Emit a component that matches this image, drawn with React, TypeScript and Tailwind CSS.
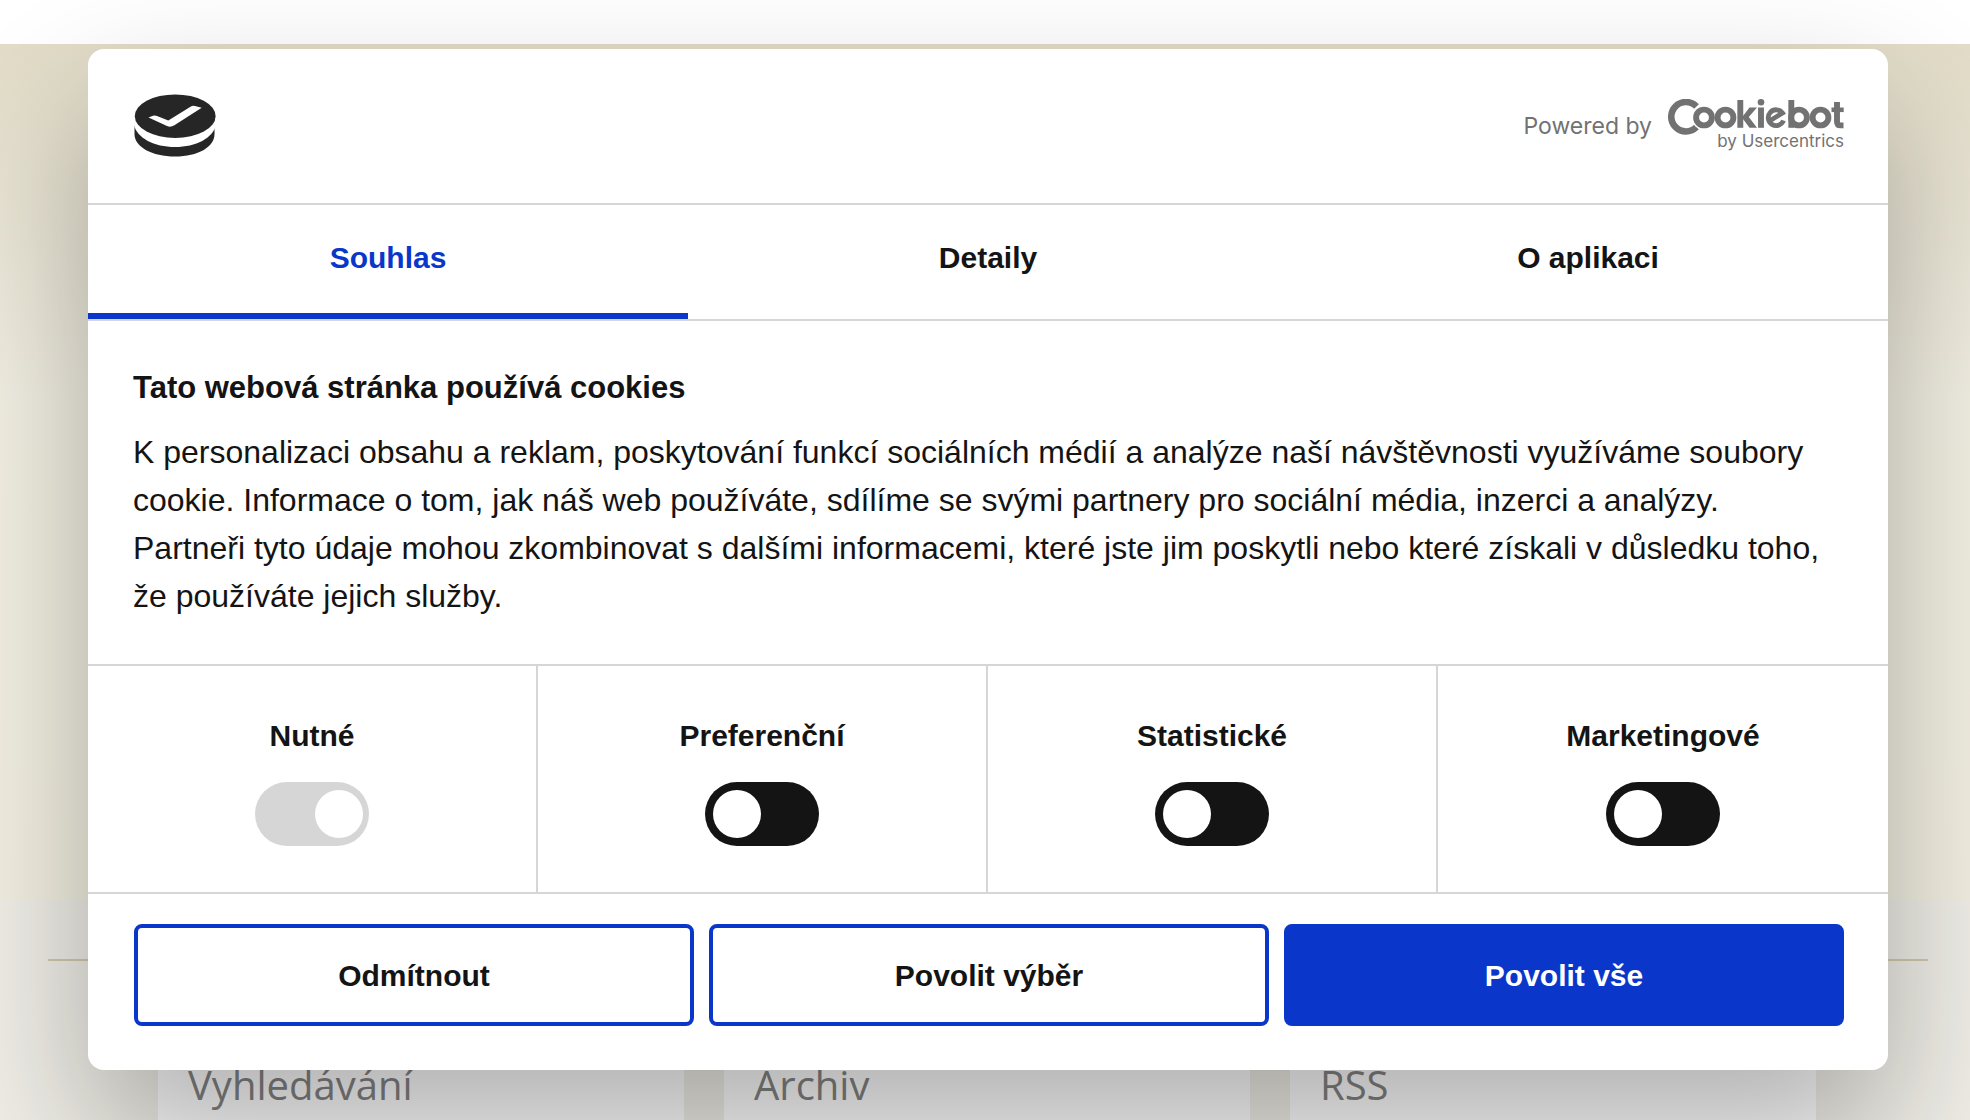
import React from "react";

const tabs = ["Souhlas", "Detaily", "O aplikaci"];
const categories = [
  { id: "necessary", label: "Nutné", locked: true },
  { id: "preferences", label: "Preferenční", locked: false },
  { id: "statistics", label: "Statistické", locked: false },
  { id: "marketing", label: "Marketingové", locked: false },
];
const panels = ["Vyhledávání", "Archiv", "RSS"];

function SiteLogo() {
  return (
    <svg width="82" height="64" viewBox="0 0 82 64" aria-hidden="true">
      <path d="M0.500 30 V40 C0.500 53 18 62.500 41 62.500 C64 62.500 80.500 53 80.500 40 V30 Z" fill="#262626" />
      <path d="M0 24 V31 C3 44 20 53 41 53 C62 53 79 44 82 31 V24 Z" fill="#fff" />
      <ellipse cx="41.200" cy="22.200" rx="40.400" ry="21.800" fill="#262626" />
      <path d="M14.500 23.500 L19 21.800 Q21 21.200 23 22 L34.300 26.500 L56.500 12.700 Q58.500 11.500 61 12 L67.700 13.800 L40 31.500 Q36.500 33.500 33 32 Z" fill="#fff" />
    </svg>
  );
}

function CookiebotLogo() {
  return (
    <svg width="176" height="54" viewBox="0 0 176 54" role="img" aria-label="Cookiebot by Usercentrics">
      <path d="M28.500 7.500 A14.700 14.700 0 1 0 28.500 28" fill="none" stroke="#727272" strokeWidth="6.600" />
      <circle cx="36" cy="18.500" r="12.300" fill="#fff" />
      <g fill="none" stroke="#727272" strokeWidth="5.900">
        <circle cx="36" cy="18.500" r="7.900" />
        <circle cx="57.500" cy="18.500" r="7.900" />
        <path d="M72.300 1 V28.800" />
        <path d="M93 8.500 V28.800" />
        <path d="M101.500 22 L114.500 14 A7.900 7.900 0 1 0 115.500 21.500" strokeWidth="4.800" />
        <path d="M123.300 1 V28.800" />
        <circle cx="131" cy="18.500" r="7.900" />
        <circle cx="152.500" cy="18.500" r="7.900" />
        <path d="M169 3 V22.500 Q169 26.400 172.500 26.400 H175.500" />
        <path d="M163.500 10.800 H175.700" strokeWidth="4.600" />
      </g>
      <path d="M75 17 L81.500 8.500 H89 L80.800 18 L89 28.800 H81.500 L75 20 Z" fill="#727272" />
      <circle cx="93" cy="3.300" r="3.300" fill="#727272" />
      <text x="176" y="48" textAnchor="end" fontFamily="Inter, sans-serif" fontSize="17" fill="#727272">
        by Usercentrics
      </text>
    </svg>
  );
}

function Toggle({ id, label, locked }: { id: string; label: string; locked: boolean }) {
  return (
    <div className="flex flex-col items-center border-r-2 border-[#d6d6d6] pt-12 pb-[46px] last:border-r-0">
      <label htmlFor={id} className="mb-6 text-[30px] leading-[44px] font-bold">
        {label}
      </label>
      <input
        id={id}
        type="checkbox"
        role="switch"
        defaultChecked={locked}
        disabled={locked}
        className="h-16 w-[114px] appearance-none rounded-full bg-[#141414] p-2 before:block before:size-12 before:rounded-full before:bg-white checked:before:ml-[52px] disabled:bg-[#d6d6d6]"
      />
    </div>
  );
}

export default function App() {
  const [active, setActive] = React.useState("Souhlas");
  return (
    <div className="grid min-h-screen grid-cols-1 overflow-hidden bg-white font-['Liberation_Sans',Arial,sans-serif] text-[#141414]">
      <div className="col-start-1 row-start-1 mt-11 flex flex-col bg-linear-to-b from-[#e2dcc8] via-[#f1eee2] via-33% to-[#f1eee0]">
        <div className="h-[855px]" />
        <div className="flex flex-1 flex-col bg-[#efede6] pr-[42px] pl-12">
          <hr className="mt-[60px] mb-[84px] border-t-2 border-[#d3c8ac]" />
          <div className="flex flex-1 gap-10 pr-28 pl-[110px]">
            {panels.map((p) => (
              <section key={p} className="flex-1 bg-[#fcfcfc] px-[30px] pt-3">
                <h2 className="font-['Open_Sans',sans-serif] text-[40px] leading-[56px] text-[#828282]">{p}</h2>
              </section>
            ))}
          </div>
        </div>
      </div>

      <div
        role="dialog"
        aria-labelledby="consent-title"
        className="z-10 col-start-1 row-start-1 mt-[49px] mr-[82px] ml-[88px] self-start rounded-2xl bg-white shadow-[0_64px_136px_rgba(0,0,0,0.3)]"
      >
        <header className="flex h-[156px] items-center justify-between border-b-2 border-[#d6d6d6] pr-11 pl-[46px]">
          <SiteLogo />
          <a href="https://www.cookiebot.com" className="flex items-center gap-4 text-[#727272]">
            <span className="font-['Inter',sans-serif] text-[23px] leading-8">Powered by</span>
            <CookiebotLogo />
          </a>
        </header>

        <div role="tablist" className="flex border-b-2 border-[#d6d6d6]">
          {tabs.map((t) => (
            <button
              key={t}
              role="tab"
              aria-selected={active === t}
              onClick={() => setActive(t)}
              className="h-[114px] flex-1 border-b-[6px] border-transparent pb-0.5 text-[30px] leading-[44px] font-bold aria-selected:border-[#0a37ca] aria-selected:text-[#0a37ca]"
            >
              {t}
            </button>
          ))}
        </div>

        <div className="px-[45px] pt-[45px] pb-11">
          <h1 id="consent-title" className="mb-[18px] text-[31px] leading-[44px] font-bold">
            Tato webová stránka používá cookies
          </h1>
          <p className="text-[32px] leading-12">
            K personalizaci obsahu a reklam, poskytování funkcí sociálních médií a analýze naší návštěvnosti využíváme soubory
            <br />
            cookie. Informace o tom, jak náš web používáte, sdílíme se svými partnery pro sociální média, inzerci a analýzy.
            <br />
            Partneři tyto údaje mohou zkombinovat s dalšími informacemi, které jste jim poskytli nebo které získali v důsledku toho,
            <br />
            že používáte jejich služby.
          </p>
        </div>

        <div className="grid grid-cols-4 border-y-2 border-[#d6d6d6]">
          {categories.map((c) => (
            <Toggle key={c.id} {...c} />
          ))}
        </div>

        <div className="flex gap-[15px] pt-[30px] pr-11 pb-11 pl-[46px]">
          <button className="h-[102px] flex-1 rounded-lg border-4 border-[#0a37ca] text-[30px] font-bold">Odmítnout</button>
          <button className="h-[102px] flex-1 rounded-lg border-4 border-[#0a37ca] text-[30px] font-bold">Povolit výběr</button>
          <button className="h-[102px] flex-1 rounded-lg border-4 border-[#0a37ca] bg-[#0a37ca] text-[30px] font-bold text-white">
            Povolit vše
          </button>
        </div>
      </div>
    </div>
  );
}
